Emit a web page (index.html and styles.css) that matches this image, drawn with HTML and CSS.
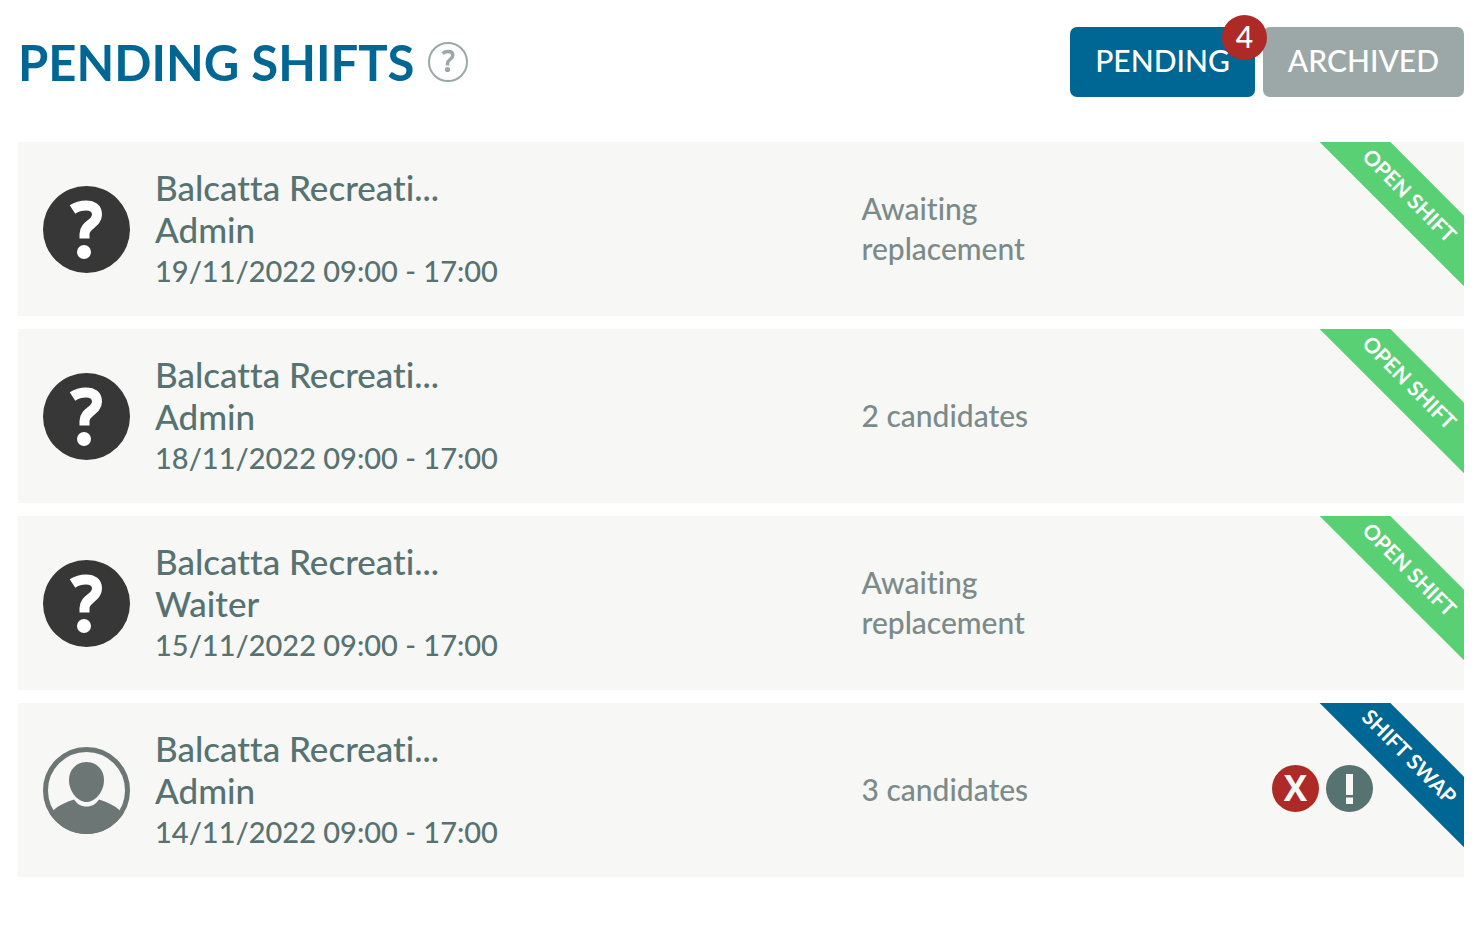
FILE: index.html
```html
<!DOCTYPE html>
<html lang="en">

<head>
	<meta charset="utf-8">
	<meta name="viewport" content="width=device-width, initial-scale=1">
	<title>Pending Shifts</title>
	<link rel="stylesheet" href="styles.css">
</head>

<body>
	<svg class="sprite" aria-hidden="true">
		<symbol id="unknown" viewBox="0 0 87 87">
			<circle cx="43.5" cy="43.5" r="43.5" fill="#373737" />
			<path d="M29.500 23.500C34 20.500 38 19.500 43 19.500C50 19.500 54 22.500 54 28.500C54 38 41.500 38.500 41.500 48V52.500" fill="none" stroke="#fff" stroke-width="10" />
			<circle cx="41" cy="66" r="7" fill="#fff" />
		</symbol>
		<symbol id="person" viewBox="0 0 87 87">
			<circle cx="43.5" cy="43.5" r="41" fill="none" stroke="#6c7675" stroke-width="5" />
			<path d="M43.500 15C53 15 61 22 61 33C61 45 52 55 43.500 55C35 55 26 45 26 33C26 22 34 15 43.500 15Z" fill="#6c7675" />
			<path d="M10 63.500C16 58 23 55 31 52.500C34 57 38 59.500 43.500 59.500C49 59.500 53 57 56 52.500C64 55 71 58 77 63.500L81 65C73 79 59 87 43.500 87C28 87 14 79 6 65Z" fill="#6c7675" />
		</symbol>
	</svg>

	<header class="header">
		<h1 class="title">PENDING SHIFTS</h1>
		<button class="help" type="button" aria-label="Help">
			<svg viewBox="0 0 40 40">
				<circle cx="20" cy="20" r="19" fill="none" stroke="currentColor" stroke-width="2" />
				<path d="M14.500 11.500C16.500 9.800 18 9.500 20 9.500C23 9.500 24.800 10.800 24.800 13.200C24.800 17 19.500 17.500 19.500 21.500V23.500" fill="none" stroke="currentColor" stroke-width="3.500" />
				<circle cx="19.500" cy="27.500" r="2.600" fill="currentColor" />
			</svg>
		</button>
		<div class="tabs">
			<button class="tab tab-active" type="button">PENDING<span class="badge">4</span></button>
			<button class="tab" type="button">ARCHIVED</button>
		</div>
	</header>

	<ul class="shifts">
		<li class="shift">
			<div class="info">
				<svg class="avatar"><use href="#unknown" /></svg>
				<div>
					<div class="name">Balcatta Recreati...</div>
					<div class="name">Admin</div>
					<div class="date">19/11/2022 09:00 - 17:00</div>
				</div>
			</div>
			<div class="status">Awaiting replacement</div>
			<div class="ribbon">OPEN SHIFT</div>
		</li>
		<li class="shift">
			<div class="info">
				<svg class="avatar"><use href="#unknown" /></svg>
				<div>
					<div class="name">Balcatta Recreati...</div>
					<div class="name">Admin</div>
					<div class="date">18/11/2022 09:00 - 17:00</div>
				</div>
			</div>
			<div class="status">2 candidates</div>
			<div class="ribbon">OPEN SHIFT</div>
		</li>
		<li class="shift">
			<div class="info">
				<svg class="avatar"><use href="#unknown" /></svg>
				<div>
					<div class="name">Balcatta Recreati...</div>
					<div class="name">Waiter</div>
					<div class="date">15/11/2022 09:00 - 17:00</div>
				</div>
			</div>
			<div class="status">Awaiting replacement</div>
			<div class="ribbon">OPEN SHIFT</div>
		</li>
		<li class="shift">
			<div class="info">
				<svg class="avatar"><use href="#person" /></svg>
				<div>
					<div class="name">Balcatta Recreati...</div>
					<div class="name">Admin</div>
					<div class="date">14/11/2022 09:00 - 17:00</div>
				</div>
			</div>
			<div class="status">3 candidates</div>
			<div class="actions">
				<button class="action action-cancel" type="button">X</button>
				<button class="action" type="button" aria-label="Details">
					<svg viewBox="0 0 47 47">
						<path d="M20 9H27V30H20ZM20 32.500H27V39H20Z" fill="#f7f7f5" />
					</svg>
				</button>
			</div>
			<div class="ribbon ribbon-swap">SHIFT SWAP</div>
		</li>
	</ul>
</body>

</html>
```
FILE: styles.css
```css
body {
	margin: 0;
	padding: 27px 18px;
	background-color: #fff;
	font-family: Lato, sans-serif;
	font-size: 30px;
	font-weight: 500;
	font-variant-ligatures: none;
	color: #567271;
}

button {
	padding: 0;
	border: none;
	background: none;
	font: inherit;
	cursor: pointer;
}

.sprite {
	position: absolute;
	width: 0;
	height: 0;
}

.header {
	display: flex;
	align-items: center;
	margin-bottom: 45px;
}

.title {
	margin: 0;
	font-size: 49px;
	line-height: 60px;
	font-weight: bold;
	color: #006693;
}

.help {
	width: 40px;
	height: 40px;
	margin-left: 14px;
	color: #9aa9a8;
}

.help svg {
	display: block;
}

.tabs {
	display: flex;
	gap: 8px;
	margin-left: auto;
}

.tab {
	position: relative;
	padding: 0 25px 4px;
	border-radius: 7px;
	background-color: #9ba8a7;
	line-height: 66px;
	color: #fff;
}

.tab-active {
	background-color: #006693;
}

.badge {
	position: absolute;
	z-index: 1;
	top: -12px;
	right: -12px;
	width: 45px;
	height: 45px;
	border-radius: 50%;
	background-color: #ad2a26;
	line-height: 42px;
	text-align: center;
}

.shifts {
	display: flex;
	flex-direction: column;
	gap: 13px;
	margin: 0;
	padding: 0;
	list-style: none;
}

.shift {
	position: relative;
	display: grid;
	grid-template-columns: 7fr 2fr 3fr;
	align-items: center;
	padding: 24px 0;
	overflow: hidden;
	background-color: #f7f7f5;
}

.info {
	display: flex;
	align-items: center;
	gap: 25px;
	padding-left: 25px;
}

.avatar {
	flex: none;
	width: 87px;
	height: 87px;
}

.name {
	font-size: 35px;
	line-height: 42px;
}

.date {
	font-size: 29px;
	line-height: 42px;
}

.status {
	padding-bottom: 2px;
	line-height: 40px;
	color: #7a8b89;
}

.actions {
	display: flex;
	justify-content: flex-end;
	gap: 7px;
	padding: 0 91px 4px 0;
}

.action {
	width: 47px;
	height: 47px;
	border-radius: 50%;
	background-color: #567271;
	font-family: "Open Sans", sans-serif;
	font-size: 35px;
	font-weight: bold;
	line-height: 44px;
	color: #f7f7f5;
}

.action svg {
	display: block;
}

.action-cancel {
	background-color: #ad2a26;
}

.ribbon {
	position: absolute;
	top: 29px;
	right: -55px;
	width: 220px;
	height: 50px;
	background-color: #59d074;
	font-size: 21px;
	font-weight: bold;
	line-height: 48px;
	text-align: center;
	color: #fff;
	transform: rotate(45deg);
}

.ribbon-swap {
	background-color: #006693;
}
```
